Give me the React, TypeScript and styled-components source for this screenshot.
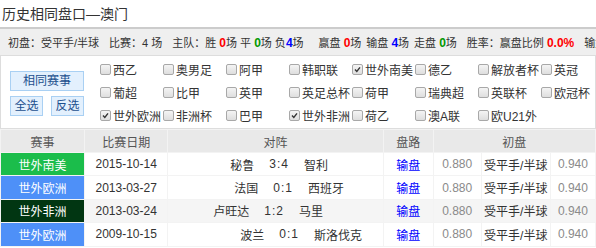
import React from 'react';
import styled, { createGlobalStyle } from 'styled-components';

type MatchType = {
  league: string,
  color: string,
  date: string,
  home: string,
  score: string,
  away: string,
  indent: number,
  result: string,
  shade?: boolean
};

const leagues: { name: string, checked?: boolean }[] = [
  { name: '西乙' }, { name: '奥男足' }, { name: '阿甲' }, { name: '韩职联' },
  { name: '世外南美', checked: true }, { name: '德乙' }, { name: '解放者杯' }, { name: '英冠' },
  { name: '葡超' }, { name: '比甲' }, { name: '英甲' }, { name: '英足总杯' },
  { name: '荷甲' }, { name: '瑞典超' }, { name: '英联杯' }, { name: '欧冠杯' },
  { name: '世外欧洲', checked: true }, { name: '非洲杯' }, { name: '巴甲' }, { name: '世外非洲', checked: true },
  { name: '荷乙' }, { name: '澳A联' }, { name: '欧U21外' },
];

const matches: MatchType[] = [
  { league: '世外南美', color: '#1bbd4b', date: '2015-10-14', home: '秘鲁', score: '3:4', away: '智利', indent: 62, result: '输盘' },
  { league: '世外欧洲', color: '#4e90f8', date: '2013-03-27', home: '法国', score: '0:1', away: '西班牙', indent: 66, result: '输盘' },
  { league: '世外非洲', color: '#013612', date: '2013-03-24', home: '卢旺达', score: '1:2', away: '马里', indent: 45, result: '输盘', shade: true },
  { league: '世外欧洲', color: '#4e90f8', date: '2009-10-15', home: '波兰', score: '0:1', away: '斯洛伐克', indent: 72, result: '输盘' },
];

export default function App() {
  return (
    <Page>
      <GlobalStyle />
      <Title>历史相同盘口—澳门</Title>

      <StatsBar>
        <Stat>初盘：受平手/半球</Stat>
        <Stat>比赛：4 场</Stat>
        <Stat $extra>
          主队：胜 <Num color="#ff0000">0</Num>场 平 <Num color="#009900">0</Num>场 负<Num color="#0000ff">4</Num>场
        </Stat>
        <PanGroup>
          <Stat>赢盘 <Num color="#ff0000">0</Num>场</Stat>
          <Stat>输盘 <Num color="#0000ff">4</Num>场</Stat>
          <Stat>走盘 <Num color="#009900">0</Num>场</Stat>
        </PanGroup>
        <Stat>胜率：赢盘比例 <Num color="#ff0000">0.0%</Num></Stat>
        <Stat>输盘比例 <Num color="#0000ff">100.0%</Num></Stat>
      </StatsBar>

      <FilterPanel>
        <ButtonColumn>
          <FilterButton $wide>相同赛事</FilterButton>
          <ButtonRow>
            <FilterButton>全选</FilterButton>
            <FilterButton>反选</FilterButton>
          </ButtonRow>
        </ButtonColumn>
        <Divider />
        <LeagueGrid>
          {leagues.map((l, i) => (
            <LeagueItem key={i}>
              <CheckBox $checked={!!l.checked}>
                {l.checked && (
                  <svg width="7" height="7" viewBox="0 0 7 7">
                    <path d="M1 3.6 L2.8 5.4 L6 1.4" fill="none" stroke="#333" strokeWidth="1.4" />
                  </svg>
                )}
              </CheckBox>
              {l.name}
            </LeagueItem>
          ))}
        </LeagueGrid>
      </FilterPanel>

      <Table>
        <colgroup>
          <col style={{ width: 83 }} />
          <col style={{ width: 82 }} />
          <col style={{ width: 214 }} />
          <col style={{ width: 49 }} />
          <col style={{ width: 47 }} />
          <col style={{ width: 68 }} />
          <col style={{ width: 44 }} />
        </colgroup>
        <tbody>
          <tr>
            <Th>赛事</Th>
            <Th>比赛日期</Th>
            <Th>对阵</Th>
            <Th>盘路</Th>
            <Th colSpan={3}>初盘</Th>
          </tr>
          {matches.map((m, i) => (
            <tr key={i}>
              <LeagueCell $bg={m.color}>{m.league}</LeagueCell>
              <Td $shade={m.shade}>{m.date}</Td>
              <Td $shade={m.shade}>
                <Versus $indent={m.indent}>
                  <span>{m.home}</span>
                  <Score>{m.score}</Score>
                  <span>{m.away}</span>
                </Versus>
              </Td>
              <Td $shade={m.shade}><ResultLink>{m.result}</ResultLink></Td>
              <Td $shade={m.shade} $muted>0.880</Td>
              <Td $shade={m.shade}>受平手/半球</Td>
              <Td $shade={m.shade} $muted>0.940</Td>
            </tr>
          ))}
        </tbody>
      </Table>
    </Page>
  );
}

const GlobalStyle = createGlobalStyle`
  body {
    margin: 0;
    background: #ffffff;
    font-family: 'Liberation Sans', 'Noto Sans CJK SC', sans-serif;
    font-size: 12px;
    color: #333333;
  }
`;

const Page = styled.div`
  width: 596px;
  height: 248px;
  overflow: hidden;
`;

const Title = styled.div`
  height: 27px;
  line-height: 29px;
  padding-left: 2px;
  font-size: 14px;
  color: #333333;
`;

const StatsBar = styled.div`
  height: 26px;
  display: flex;
  align-items: center;
  gap: 10px;
  padding-left: 8px;
  background: #efefef;
  border-top: 2px solid #cccccc;
  border-bottom: 1px solid #dddddd;
  white-space: nowrap;
  overflow: hidden;
  font-size: 11px;
`;

const Stat = styled.span<{ $extra?: boolean }>`
  flex-shrink: 0;
  margin-right: ${(props) => props.$extra ? '5px' : '0'};
`;

const PanGroup = styled.span`
  display: flex;
  gap: 5px;
  flex-shrink: 0;
`;

const Num = styled.b`
  color: ${(props: { color: string }) => props.color};
  font-weight: bold;
  font-size: 12px;
`;

const FilterPanel = styled.div`
  height: 72px;
  display: flex;
  align-items: center;
  border-left: 1px solid #dddddd;
  border-right: 1px solid #dddddd;
  background: #ffffff;
`;

const ButtonColumn = styled.div`
  display: flex;
  flex-direction: column;
  gap: 5px;
  padding-left: 9px;
  width: 74px;
  margin-top: 2px;
`;

const ButtonRow = styled.div`
  display: flex;
  justify-content: space-between;
`;

const FilterButton = styled.div<{ $wide?: boolean }>`
  width: ${(props) => props.$wide ? '72px' : '31px'};
  height: 18px;
  line-height: 18px;
  text-align: center;
  background: #e3f0fd;
  border: 1px solid #a9d0f3;
  color: #1c4f8e;
  font-size: 12px;
  cursor: pointer;
`;

const Divider = styled.div`
  width: 1px;
  height: 66px;
  background: #d4d4d4;
  margin-left: 8px;
  margin-right: 8px;
`;

const LeagueGrid = styled.div`
  display: grid;
  grid-template-columns: repeat(8, 63px);
  grid-auto-rows: 23px;
  margin-top: 1px;
`;

const LeagueItem = styled.div`
  display: flex;
  align-items: center;
  white-space: nowrap;
  font-size: 12px;
  color: #333333;
`;

const CheckBox = styled.span<{ $checked: boolean }>`
  width: 9px;
  height: 9px;
  margin-right: 2px;
  border: 1px solid #a8a8a8;
  border-radius: 2px;
  background: linear-gradient(#f4f4f4, #dedede);
  display: inline-flex;
  align-items: center;
  justify-content: center;
  flex-shrink: 0;
`;

const Table = styled.table`
  width: 596px;
  border-collapse: separate;
  border-spacing: 1px;
  table-layout: fixed;
  background: #f3f3f3;
  border-top: 1px solid #dddddd;
  margin-top: 0;
`;

const Th = styled.td`
  height: 22px;
  padding: 0;
  text-align: center;
  background: #e9e9e9;
  color: #555555;
  font-size: 12px;
`;

const Td = styled.td<{ $shade?: boolean, $muted?: boolean }>`
  height: 22.4px;
  padding: 0;
  text-align: center;
  background: ${(props) => props.$shade ? '#f5f5f5' : '#ffffff'};
  color: ${(props) => props.$muted ? '#8a8a8a' : '#333333'};
  font-size: 12px;
  white-space: nowrap;
`;

const LeagueCell = styled.td<{ $bg: string }>`
  height: 22.4px;
  padding: 0;
  text-align: center;
  background: ${(props) => props.$bg};
  color: #ffffff;
  font-size: 12px;
`;

const Versus = styled.div<{ $indent: number }>`
  display: flex;
  align-items: center;
  gap: 15px;
  padding-left: ${(props) => props.$indent}px;
`;

const Score = styled.span`
  letter-spacing: 1px;
`;

const ResultLink = styled.span`
  color: #0000ff;
  cursor: pointer;
`;
